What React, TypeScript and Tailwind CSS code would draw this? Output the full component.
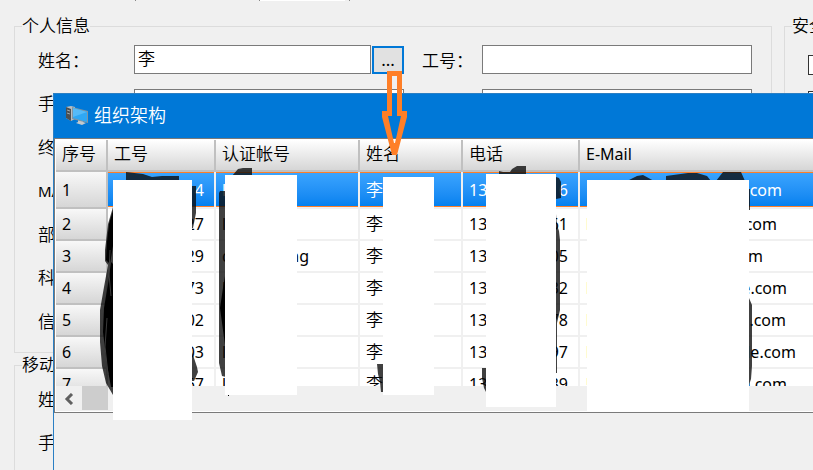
import clsx from 'clsx';

const columns = ['工号', '认证帐号', '姓名', '电话', 'E-Mail'];

const people = [
  { no: '4', login: ['l', ''], name: '李', phone: ['13', '6'], mail: '.com', mailEnd: 196 },
  { no: '27', login: ['l', ''], name: '李', phone: ['13', '61'], mail: '.com', mailEnd: 191 },
  { no: '29', login: ['d', 'ng'], name: '李', phone: ['13', '05'], mail: 'om', mailEnd: 177 },
  { no: '73', login: ['l', ''], name: '李', phone: ['13', '32'], mail: 'e.com', mailEnd: 201 },
  { no: '02', login: ['l', ''], name: '李', phone: ['13', '78'], mail: 'e.com', mailEnd: 200 },
  { no: '03', login: ['l', ''], name: '李', phone: ['13', '97'], mail: 'de.com', mailEnd: 210 },
  { no: '67', login: ['l', ''], name: '李', phone: ['13', '39'], mail: 'e.com', mailEnd: 201 },
];

const fields = [
  ['name', '姓名：', 'staff-no', '工号：'],
  ['mobile', '手机：', 'phone', '电话：'],
  ['terminal', '终端：', 'ip', 'IP：'],
  ['mac', 'MAC：', 'port', '端口：'],
  ['department', '部门：', 'duty', '职务：'],
  ['section', '科室：', 'room', '房间：'],
  ['info', '信息：', 'remark', '备注：'],
];

const inputClass = 'h-full w-0 min-w-0 grow border border-[#7a7a7a] bg-white px-[3px] pb-1 outline-none';

function FieldRow({ field }: { field: string[] }) {
  const [id, label, otherId, otherLabel] = field;
  return (
    <div className="flex h-[29px] items-center">
      <label htmlFor={id} className={clsx('w-24 shrink-0 pt-0.5', id === 'mac' && 'text-[15px] font-normal')}>
        {label}
      </label>
      <div className="flex h-full min-w-0 grow basis-2">
        <input id={id} defaultValue={id === 'name' ? '李' : ''} className={inputClass} />
        {id === 'name' && (
          <button
            type="button"
            aria-label="选择"
            className="ml-px mt-px flex w-8 items-end justify-center border-2 border-[#0078d7] bg-[#e1e1e1] pb-0.5 font-normal leading-5"
          >
            ...
          </button>
        )}
      </div>
      <label htmlFor={otherId} className="ml-[18px] w-[60px] shrink-0 pt-0.5">
        {otherLabel}
      </label>
      <input id={otherId} className={inputClass} />
    </div>
  );
}

function ComputerIcon() {
  return (
    <svg width="24" height="22" viewBox="0 0 24 22" aria-hidden="true">
      <path d="M1 3l5-1 4 1v12l-4 2-5-3z" fill="#b9bec1" />
      <path d="M1 3l5 2v12l-5-3z" fill="#4a5054" />
      <path d="M2 6l3 1M2 9l3 1" stroke="#9da7ac" />
      <path d="M13 16l5 1v1l3 1-4 2-6-2 2-1z" fill="#c4c9cc" />
      <path d="M7 3l16 4v12L7 15z" fill="#7f95a3" />
      <path d="M8 4l14 4v10L8 14z" fill="#2fa8f4" />
      <path d="M8 4l14 4L8 13z" fill="#56bbf8" />
    </svg>
  );
}

function Cell({ selected, children }: { selected: boolean; children: React.ReactNode }) {
  return (
    <td
      className={clsx(
        'border-b-2 border-r-2 border-[#f0f0f0] px-[6px] py-0 font-normal last:border-r-0',
        selected &&
          'bg-gradient-to-b from-[#3ba5ff] to-[#0080ee] bg-clip-padding text-white shadow-[inset_0_1px_#ff7f27,inset_0_-1px_#ff7f27]',
      )}
    >
      {children}
    </td>
  );
}

function PeopleTable() {
  return (
    <table className="w-full table-fixed border-separate border-spacing-0 text-left text-base leading-5">
      <colgroup>
        <col className="w-[52px]" />
        <col className="w-[108px]" />
        <col className="w-36" />
        <col className="w-[103px]" />
        <col className="w-[117px]" />
        <col />
      </colgroup>
      <thead>
        <tr className="h-8">
          {['序号', ...columns].map((column) => (
            <th
              key={column}
              className={clsx(
                'whitespace-nowrap border-b-2 border-r-2 border-[#c0c0c0] bg-gradient-to-b from-white to-[#d6d6d6] bg-clip-padding px-[6px] pb-0.5 pt-0 last:border-r-0',
                column === 'E-Mail' ? 'font-normal' : 'text-[17px] font-[350]',
              )}
            >
              {column}
            </th>
          ))}
        </tr>
      </thead>
      <tbody>
        {people.map((person, index) => (
          <tr key={index} className={index === 0 ? 'h-[37px]' : 'h-8'}>
            <th className="border-b-2 border-r-2 border-[#c0c0c0] bg-gradient-to-b from-[#f8f8f8] to-[#d6d6d6] bg-clip-padding px-[6px] py-0 font-normal">
              {index + 1}
            </th>
            <Cell selected={index === 0}>
              <div className="pr-1 text-right">{person.no}</div>
            </Cell>
            <Cell selected={index === 0}>
              <div className="flex justify-between pr-[43px]">
                <span>{person.login[0]}</span>
                <span>{person.login[1]}</span>
              </div>
            </Cell>
            <Cell selected={index === 0}>
              <div className="text-[17px] font-[350]">{person.name}</div>
            </Cell>
            <Cell selected={index === 0}>
              <div className="flex justify-between pr-1">
                <span>{person.phone[0]}</span>
                <span>{person.phone[1]}</span>
              </div>
            </Cell>
            <Cell selected={index === 0}>
              <div className="text-right" style={{ width: person.mailEnd }}>
                {person.mail}
              </div>
            </Cell>
          </tr>
        ))}
      </tbody>
    </table>
  );
}

function OrganizationWindow() {
  return (
    <section className="absolute bottom-0 left-[53px] right-0 top-[93px] border-l border-t border-[#2a7fc4] bg-[#f0f0f0]">
      <header className="flex h-11 items-center bg-[#0078d7] pb-0.5 pl-[11px] text-lg leading-6 text-white">
        <ComputerIcon />
        <h2 className="ml-[5px] font-[350]">组织架构</h2>
      </header>
      <div className="border-y border-l border-[#7a7a7a] bg-white py-px pl-px">
        <div className="h-[246px] overflow-hidden">
          <PeopleTable />
        </div>
        <div className="flex h-[25px] bg-[#f0f0f0]">
          <button type="button" aria-label="向左滚动" className="flex w-[26px] items-center justify-center">
            <svg width="10" height="12" viewBox="0 0 10 12">
              <path d="M8 1L3 6l5 5" fill="none" stroke="#606060" strokeWidth="3" />
            </svg>
          </button>
          <div className="h-6 w-[26px] bg-[#cdcdcd]" />
        </div>
      </div>
    </section>
  );
}

// Pen strokes, white patches and the arrow drawn on top of the windows
function Annotations() {
  return (
    <svg
      className="pointer-events-none absolute left-0 top-0"
      width="813"
      height="470"
      viewBox="0 0 813 470"
      aria-hidden="true"
    >
      <g fill="#0a0a0a" fillOpacity="0.78">
        <path d="M126 172l17 2 9 3 10-1h17v5h-53z" />
        <path d="M192 186h4v27l-3 15h-1zM192 352l5 15 1 5-4 9h-2z" />
        <path d="M114 207h-1l-5 17-3 26v11l3 4-4 22-4 23v32l2 24 4 17 7 12h1z" />
        <path d="M232 176l6-7 5-1h9v8zM219 193l1-2h6v186l-4-1-3-13z" />
        <path d="M377 364h7v28h-3l-1-10-2-8z" />
        <path d="M499 171l4 1h7l2-3 5-3h9v9h-27z" />
        <path d="M556 177l3 1 2 4v16l-5 1zM556 214l1 11 2 6 1 9v70l-3 13v50h-1z" />
        <path d="M482 368h5v26l-3-6-2-10z" />
        <path d="M627 181l10-5 6-1 11 6zM666 176l22-3h9l10 3 4 5h-45zM716 181l7-9h18l4 9z" />
        <path d="M749 189h1v21h-1zM749 298l3 7v61l-1 13-2 6z" />
      </g>
      <g fill="#000">
        <path d="M114 207l-5 17-2 18-1 18 4 4 4-24zM111 262l-3 22-4 24-1 24 4 33 4 22h2V264zM226 270l-3 18-3 20 5 37h1z" />
        <path d="M228 395h1v1h-1z" />
      </g>
      <g fill="none" stroke="#3b3b3b">
        <path d="M110 250l-1 24 2 22M107 318l-2 29 3 27" />
      </g>
      <g fill="#fff">
        <path d="M113 180h79v240h-79z" />
        <path d="M225 175h72v220h-72z" />
        <path d="M383 177h51v218h-51z" />
        <path d="M486 174h70v233h-70z" />
        <path d="M587 180h162v232H587z" />
      </g>
      <path
        fill="#fffbd0"
        d="M586 218h1v12h-1zM586 282h1v12h-1zM586 314h1v12h-1zM586 346h1v12h-1zM586 378h1v7h-1z"
      />
      <path
        fill="#ff7f27"
        fillRule="evenodd"
        d="M387 71h15v40h5v6l-10 38h-5l-10-38v-6h5zM392 76v40h-4l6 27h1l6-27h-4V76z"
      />
    </svg>
  );
}

export default function App() {
  return (
    <main className="relative h-screen overflow-hidden bg-[#f0f0f0] font-['Noto_Sans','Noto_Sans_CJK_SC',sans-serif] text-[17px] font-[350] leading-5 text-black">
      <div className="flex h-4 items-start pl-[135px]">
        <div className="h-px w-px bg-[#888]" />
        <div className="ml-[123px] h-px w-[86px] border-l border-[#888] bg-white" />
        <div className="ml-1 h-px w-px bg-[#888]" />
      </div>
      <div className="flex gap-3 pl-[14px]">
        <form className="w-0 min-w-0 grow">
          <fieldset className="min-w-0 border border-[#dcdcdc] pb-[17px] pl-[23px] pr-[19px] pt-[9px]">
            <legend className="-ml-4 whitespace-nowrap">个人信息</legend>
            <div className="flex h-[290px] flex-col justify-between">
              {fields.map((field) => (
                <FieldRow key={field[0]} field={field} />
              ))}
            </div>
          </fieldset>
          <fieldset className="mt-0.5 min-w-0 border border-[#dcdcdc] pb-[17px] pl-[23px] pr-[19px] pt-[9px]">
            <legend className="-ml-4 whitespace-nowrap">移动终端</legend>
            <div className="flex flex-col gap-[14px]">
              <FieldRow field={['mobile-name', '姓名：', 'mobile-no', '工号：']} />
              <FieldRow field={['mobile-phone', '手机：', 'mobile-model', '型号：']} />
            </div>
          </fieldset>
        </form>
        <fieldset className="w-[29px] min-w-0 shrink-0 border border-r-0 border-[#dcdcdc] pl-[23px] pt-[19px]">
          <legend className="-ml-4 w-10 whitespace-nowrap">安全</legend>
          <div className="flex w-5 flex-col gap-4">
            <input type="checkbox" aria-label="绑定" className="h-5 w-5 appearance-none border border-[#333] bg-white" />
            <input type="checkbox" aria-label="启用" className="h-5 w-5 appearance-none border border-[#333] bg-white" />
          </div>
        </fieldset>
      </div>
      <OrganizationWindow />
      <Annotations />
    </main>
  );
}
